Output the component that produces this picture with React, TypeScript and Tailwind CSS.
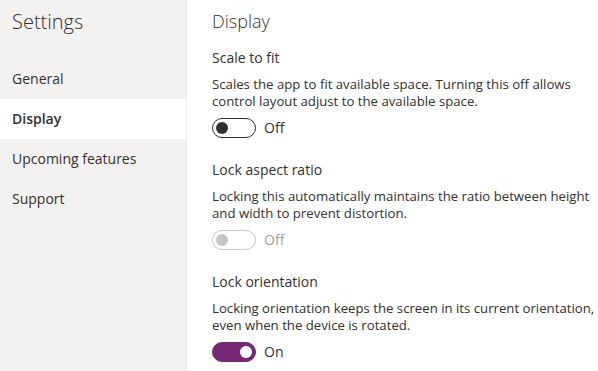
type ToggleProps = {
  on?: boolean;
  disabled?: boolean;
};

const Toggle = ({ on = false, disabled = false }: ToggleProps) => {
  let track = "border border-[#323130] bg-white justify-start";
  let thumb = "bg-[#323130]";
  let label = "text-[#323130]";
  if (on) {
    track = "border border-[#742774] bg-[#742774] justify-end";
    thumb = "bg-white";
  }
  if (disabled) {
    track = "border border-[#c8c6c4] bg-white justify-start";
    thumb = "bg-[#c8c6c4]";
    label = "text-[#a19f9d]";
  }
  return (
    <div className="mt-[8px] flex h-[20px] items-center gap-[8px]">
      <div className={`flex h-[20px] w-[44px] items-center rounded-full px-[3px] ${track}`}>
        <span className={`block h-[12px] w-[12px] rounded-full ${thumb}`} />
      </div>
      <span className={`text-[14px] leading-[20px] ${label}`}>{on ? "On" : "Off"}</span>
    </div>
  );
};

type SectionProps = {
  title: string;
  text: string[];
  on?: boolean;
  disabled?: boolean;
  first?: boolean;
};

const Section = ({ title, text, on, disabled, first }: SectionProps) => {
  return (
    <section className={first ? "mt-[15px]" : "mt-[22px]"}>
      <h2 className="text-[14px] leading-[20px]">{title}</h2>
      <p className="mt-[8px] text-[13.2px] leading-[17px]">
        {text.map((line) => (
          <span key={line} className="block whitespace-nowrap">
            {line}
          </span>
        ))}
      </p>
      <Toggle on={on} disabled={disabled} />
    </section>
  );
};

const navItems = ["General", "Display", "Upcoming features", "Support"];

export default function App() {
  return (
    <div
      className="flex h-[371px] w-[598px] overflow-hidden bg-white text-[#323130]"
      style={{ fontFamily: '"Open Sans", sans-serif' }}
    >
      <aside className="h-full w-[187px] shrink-0 border-r border-[#edebe9] bg-[#f3f2f1]">
        <div className="h-[59px] px-[12px] pt-[8px] text-[20px] leading-[28px] font-light">Settings</div>
        <nav className="flex flex-col">
          {navItems.map((item) => (
            <div
              key={item}
              className={
                item === "Display"
                  ? "h-[40px] bg-white px-[12px] text-[14px] leading-[40px] font-semibold"
                  : "h-[40px] px-[12px] text-[14px] leading-[40px]"
              }
            >
              {item}
            </div>
          ))}
        </nav>
      </aside>

      <main className="min-w-0 flex-1 pl-[25px] pt-[9px]">
        <h1 className="text-[18px] leading-[24px] font-light">Display</h1>
        <Section
          first
          title="Scale to fit"
          text={[
            "Scales the app to fit available space. Turning this off allows",
            "control layout adjust to the available space.",
          ]}
        />
        <Section
          title="Lock aspect ratio"
          text={[
            "Locking this automatically maintains the ratio between height",
            "and width to prevent distortion.",
          ]}
          disabled
        />
        <Section
          title="Lock orientation"
          text={[
            "Locking orientation keeps the screen in its current orientation,",
            "even when the device is rotated.",
          ]}
          on
        />
      </main>
    </div>
  );
}
